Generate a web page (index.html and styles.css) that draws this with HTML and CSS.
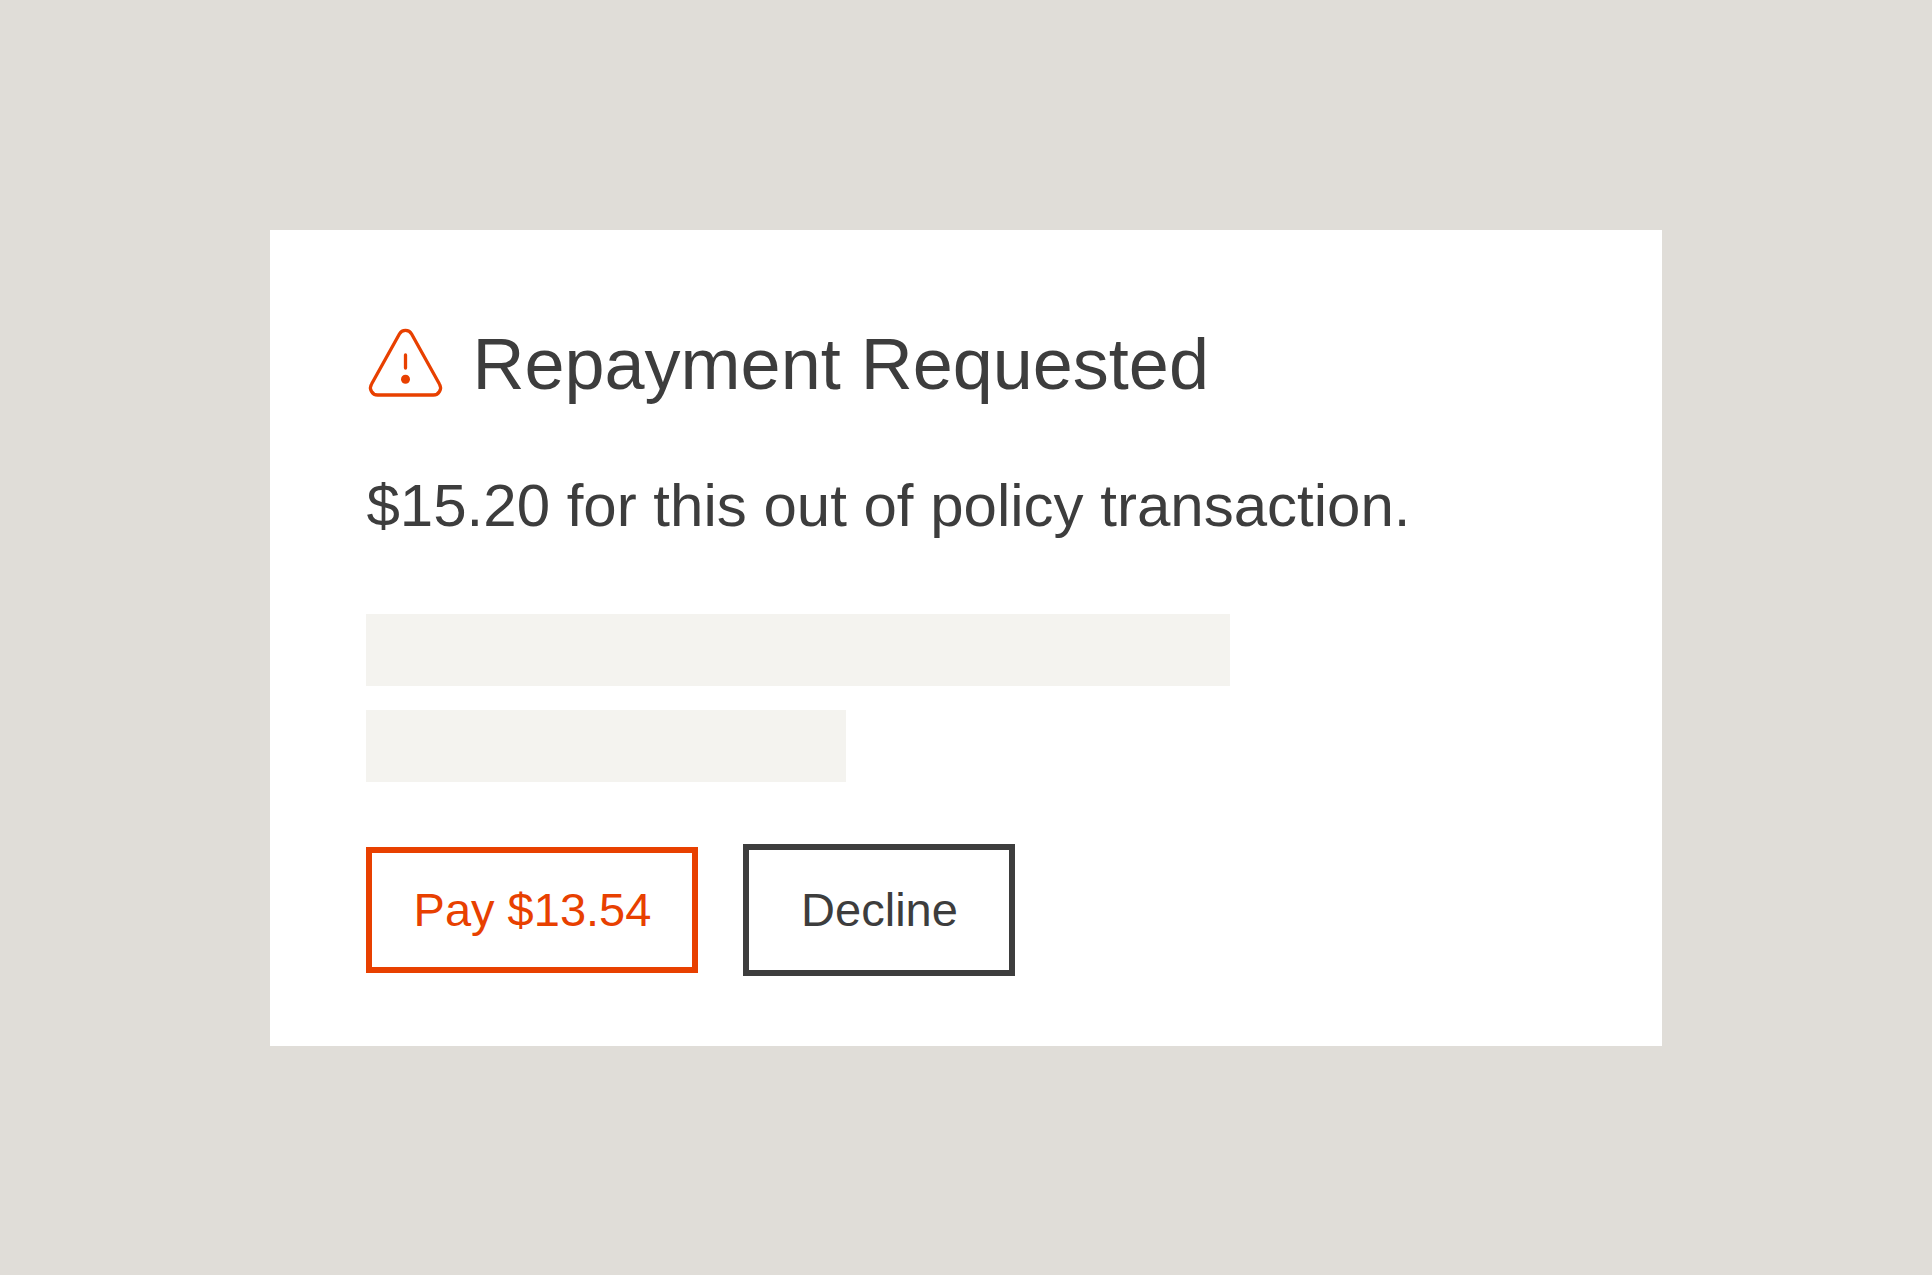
FILE: index.html
```
<!DOCTYPE html>
<html lang="en">
<head>
    <meta charset="UTF-8">
    <meta name="viewport" content="width=device-width, initial-scale=1.0">
    <title>Repayment Requested</title>
    <link rel="stylesheet" href="styles.css">
</head>
<body>
    <main class="card">
        <div class="card-header">
            <svg class="warning-icon" viewBox="0 0 80 80" fill="none" aria-hidden="true">
                <path d="M33.4 10 A7 7 0 0 1 45.6 10 L73.4 60 A7.2 7.2 0 0 1 67.2 71 H11.8 A7.2 7.2 0 0 1 5.6 60 Z" stroke="currentColor" stroke-width="3.3"/>
                <path d="M39.5 31 V44" stroke="currentColor" stroke-width="3.3" stroke-linecap="round"/>
                <circle cx="39.5" cy="55.2" r="4.5" fill="currentColor"/>
            </svg>
            <h1 class="title">Repayment Requested</h1>
        </div>
        <p class="message">$15.20 for this out of policy transaction.</p>
        <div class="placeholder">
            <div class="bar bar-long"></div>
            <div class="bar bar-short"></div>
        </div>
        <div class="actions">
            <button type="button" class="btn btn-pay">Pay $13.54</button>
            <button type="button" class="btn btn-decline">Decline</button>
        </div>
    </main>
</body>
</html>
```
FILE: styles.css
```
* {
    box-sizing: border-box;
}
body {
    margin: 0;
    min-height: 100vh;
    display: flex;
    align-items: center;
    justify-content: center;
    background-color: #e0ddd8;
    color: #3d3d3d;
    font-family: "Liberation Sans", Arial, sans-serif;
}
.card {
    width: 72%;
    padding: 90px 96px 70px;
    background-color: #fff;
}
.card-header {
    display: flex;
    align-items: center;
    gap: 26px;
}
.warning-icon {
    flex: none;
    width: 80px;
    height: 80px;
    color: #e84000;
}
.title {
    margin: 0;
    font-size: 72px;
    font-weight: 400;
    line-height: 88px;
}
.message {
    margin: 62px 0 72px;
    font-size: 60px;
    line-height: 72px;
}
.placeholder {
    display: flex;
    flex-direction: column;
    gap: 24px;
    margin-bottom: 62px;
}
.bar {
    height: 72px;
    background-color: #f4f3ef;
}
.bar-long {
    width: 72%;
}
.bar-short {
    width: 40%;
}
.actions {
    display: flex;
    flex-wrap: wrap;
    align-items: center;
    gap: 45px;
}
.btn {
    padding: 0 40px;
    border: 6px solid currentColor;
    background-color: #fff;
    font-family: inherit;
    font-size: 47px;
    cursor: pointer;
}
.btn-pay {
    min-width: 332px;
    height: 126px;
    color: #e84000;
}
.btn-decline {
    min-width: 272px;
    height: 132px;
    color: #3d3d3d;
}
```
